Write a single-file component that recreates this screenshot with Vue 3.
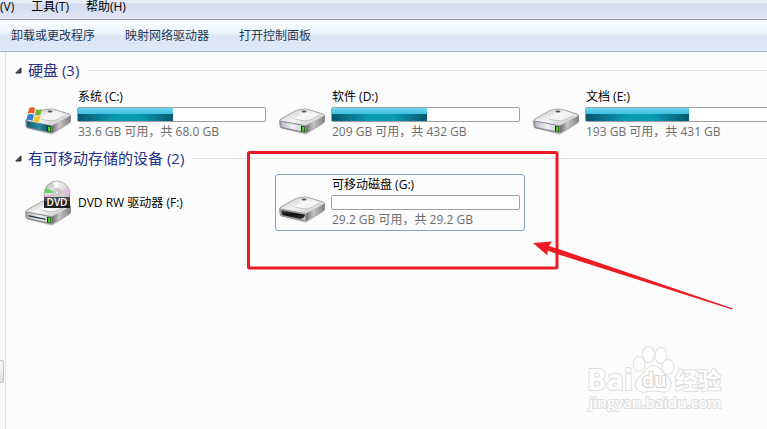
<script setup>
import { ref } from 'vue';

const menus = ['(V)', '工具(T)', '帮助(H)'];
const commands = ['卸载或更改程序', '映射网络驱动器', '打开控制面板'];

const groups = ref([
  {
    title: '硬盘 (3)',
    open: true,
    drives: [
      { name: '系统 (C:)', icon: 'system', used: 51, info: '33.6 GB 可用，共 68.0 GB' },
      { name: '软件 (D:)', icon: 'disk', used: 51, info: '209 GB 可用，共 432 GB' },
      { name: '文档 (E:)', icon: 'disk', used: 55, info: '193 GB 可用，共 431 GB' },
    ],
  },
  {
    title: '有可移动存储的设备 (2)',
    open: true,
    drives: [
      { name: 'DVD RW 驱动器 (F:)', icon: 'dvd' },
      { name: '可移动磁盘 (G:)', icon: 'removable', used: 0, info: '29.2 GB 可用，共 29.2 GB' },
    ],
  },
]);

const selected = ref('可移动磁盘 (G:)');
</script>

<template>
  <div class="explorer">
    <!-- Gradients shared by the drive icons -->
    <svg class="defs" width="0" height="0" aria-hidden="true">
      <defs>
        <linearGradient id="top" x1="0" y1="0" x2="1" y2="1">
          <stop offset="0" stop-color="#c4c4c4" />
          <stop offset="0.5" stop-color="#f4f4f4" />
          <stop offset="1" stop-color="#bcbcbc" />
        </linearGradient>
        <linearGradient id="side" x1="0" y1="0" x2="1" y2="0">
          <stop offset="0" stop-color="#6c6c6c" />
          <stop offset="0.4" stop-color="#c6c6c6" />
          <stop offset="1" stop-color="#7e7e7e" />
        </linearGradient>
        <linearGradient id="front" x1="0" y1="0" x2="1" y2="0">
          <stop offset="0" stop-color="#b9bcc4" />
          <stop offset="0.5" stop-color="#eceef4" />
          <stop offset="1" stop-color="#c5c8d0" />
        </linearGradient>
        <linearGradient id="teal" x1="0" y1="0" x2="1" y2="0">
          <stop offset="0" stop-color="#0d5870" />
          <stop offset="0.5" stop-color="#2b8ea0" />
          <stop offset="1" stop-color="#0e3f4e" />
        </linearGradient>
        <linearGradient id="hollow" x1="0" y1="0" x2="0" y2="1">
          <stop offset="0" stop-color="#555" />
          <stop offset="0.5" stop-color="#111" />
          <stop offset="1" stop-color="#333" />
        </linearGradient>
        <linearGradient id="disc" x1="0" y1="0" x2="1" y2="1">
          <stop offset="0" stop-color="#a9a9a9" />
          <stop offset="0.4" stop-color="#eeeeee" />
          <stop offset="1" stop-color="#a2a2a2" />
        </linearGradient>
      </defs>
    </svg>

    <nav class="menubar">
      <button v-for="menu in menus" :key="menu" type="button">{{ menu }}</button>
    </nav>

    <div class="toolbar">
      <button v-for="command in commands" :key="command" type="button">{{ command }}</button>
    </div>

    <div class="body">
      <div class="sidebar">
        <div class="thumb"></div>
      </div>

      <main class="content">
        <section v-for="group in groups" :key="group.title" class="group">
          <h2>
            <button type="button" :aria-expanded="group.open" @click="group.open = !group.open">
              <svg width="7" height="7" viewBox="0 0 7 7" aria-hidden="true">
                <path d="M6 0.800V6H0.800Z" fill="#595959" stroke="#262626" />
              </svg>
              {{ group.title }}
            </button>
          </h2>

          <div v-if="group.open" class="drives">
            <button
              v-for="drive in group.drives"
              :key="drive.name"
              type="button"
              class="drive"
              :class="{ selected: selected === drive.name }"
              @click="selected = drive.name"
            >
              <svg class="icon" viewBox="0 0 48 48" aria-hidden="true">
                <g :transform="drive.icon === 'dvd' ? 'translate(0 3)' : null">
                  <path d="M3 37L28 44L47 32V29L28 40Z" fill="#000" opacity="0.15" />
                  <path d="M1.500 30Q1.500 29 3 28L17 20Q19 19 22 18.500L27 18Q29 18 31 18.700L45 23Q47 24 46.500 25V30Q46.500 31 45 32L29 41.500Q27.500 42.500 26 42L3.500 37Q2 36.500 2 35Z" fill="#d6d6d6" stroke="#808080" stroke-width="0.700" />
                  <path d="M28 34.500L46.500 24.500V30.500L28 42Z" fill="url(#side)" />
                  <path d="M2 29.500L18 20L28 18.300L46 24.300L28 34.300Z" fill="url(#top)" />
                  <path d="M17 27.500L25 20.500L41 24.500L30 30Z" fill="#fff" opacity="0.450" />
                  <path d="M17 28Q28 31 32 29L42 24.500" fill="none" stroke="#aaa" stroke-width="0.600" />
                  <ellipse cx="26" cy="20.500" rx="2.500" ry="0.900" fill="#555" />
                  <path v-if="drive.icon === 'system'" d="M2.500 30L27.500 34.800V41.500L3 36.300Z" fill="url(#teal)" stroke="#57727a" stroke-width="0.600" />
                  <path v-else-if="drive.icon === 'removable'" d="M2 29.800L28 34.800V41.800L3 36.500Z" fill="#bdbdbd" stroke="#777" stroke-width="0.600" />
                  <path v-else d="M2.500 30L27.500 34.800V41.500L3 36.300Z" fill="url(#front)" stroke="#777" stroke-width="0.800" />
                  <path v-if="drive.icon === 'removable'" d="M3.200 31L27 35.700L26.800 37Q25 40.500 21 39.800L5 36.300Q3.500 35.500 3.200 31Z" fill="url(#hollow)" />
                  <template v-else>
                    <path d="M23 34.800L27 35.600V41L23 40.200Z" fill="#123312" />
                    <path d="M24.200 35.500L26.400 35.900V40.400L24.200 40Z" fill="#4be01c" />
                  </template>
                  <path v-if="drive.icon === 'dvd'" d="M4.500 33L21.500 36.800V38L4.500 34.400Z" fill="#333b48" />
                </g>

                <g v-if="drive.icon === 'system'">
                  <path d="M5 17.500Q8 15 11 17.300L10 23Q7 21 3.800 23Z" fill="#e75a25" />
                  <path d="M12 18Q15 20 18 17.500L16.500 23.500Q14 25.500 11 23.500Z" fill="#73b52d" />
                  <path d="M3.500 24Q7 22 9.800 24.200L8.500 30Q6 28 2.300 30Z" fill="#327fd0" />
                  <path d="M10.800 24.700Q14 26.500 16.500 24.500L15 30.500Q12.500 32.500 9.500 30.500Z" fill="#f9c52b" />
                </g>

                <g v-if="drive.icon === 'dvd'">
                  <circle cx="33" cy="15" r="13" fill="url(#disc)" stroke="#999" stroke-width="0.700" />
                  <path d="M33 14L22 9Q20.700 11 20.700 14Z" fill="#62d85c" />
                  <path d="M33 14L21 17L22 21Z" fill="#d98bd0" opacity="0.700" />
                  <path d="M33 14L44 9L45.500 15Z" fill="#e6b7df" opacity="0.700" />
                  <path d="M33 14L29 3L35 2.600Z" fill="#fff" opacity="0.800" />
                  <circle cx="33" cy="13.500" r="4" fill="#d9d9d9" stroke="#aaa" stroke-width="0.600" />
                  <circle cx="33" cy="13.500" r="1.700" fill="#fff" stroke="#888" stroke-width="0.600" />
                  <rect x="20" y="18" width="26" height="11" fill="#222" />
                  <rect x="20" y="18" width="26" height="4" fill="#4a4a4a" />
                  <text x="33" y="27" text-anchor="middle" class="badge">DVD</text>
                </g>
              </svg>

              <span class="details">
                <span class="name">{{ drive.name }}</span>
                <template v-if="drive.info">
                  <span class="bar">
                    <span class="fill" :style="{ width: drive.used + '%' }"></span>
                  </span>
                  <span class="info">{{ drive.info }}</span>
                </template>
              </span>
            </button>
          </div>
        </section>
      </main>
    </div>

    <!-- Red frame and arrow pointing at the removable disk -->
    <svg class="marker" width="767" height="429" viewBox="0 0 767 429" aria-hidden="true">
      <rect x="248.500" y="152.500" width="308.500" height="115.500" rx="1" fill="none" stroke="#ed1c24" stroke-width="3" />
      <path d="M533 243L552 241.500L549 246L560 249.500L733 308.500L732 309.500L557 254L547.500 250.500V255.500Z" fill="#ed1c24" />
    </svg>

    <!-- Watermark -->
    <svg class="watermark" width="150" height="76" viewBox="0 0 150 76" role="img" aria-label="Baidu 经验">
      <g class="outline">
        <text x="1" y="48" font-size="29">Bai</text>
        <ellipse cx="53" cy="22" rx="5.500" ry="7" />
        <ellipse cx="62.500" cy="12.500" rx="5.500" ry="7.500" />
        <ellipse cx="75" cy="13.500" rx="5.500" ry="7.500" />
        <ellipse cx="82" cy="25" rx="5.500" ry="7" />
        <path d="M67.500 24C62 24 60 29 56 33C51 37 48 42 51 46.500C55 52 61 48.500 67.500 48.500C74 48.500 80 52 83.500 46.500C86.500 42 84 37 79 33C75 29 73 24 67.500 24Z" />
        <text x="56" y="45" font-size="19" class="du">du</text>
        <text x="89" y="47" font-size="23" class="cjk">经验</text>
        <text x="3" y="66" font-size="15" class="url">jingyan.baidu.com</text>
      </g>
    </svg>
  </div>
</template>

<style>
body {
  margin: 0;
  background: #fcfcfc;
}
</style>

<style scoped>
.explorer {
  position: relative;
  display: flex;
  flex-direction: column;
  min-height: 100vh;
  overflow: hidden;
  background: #fcfcfc;
  font-family: "Open Sans", "Noto Sans CJK SC", sans-serif;
  font-size: 12px;
  line-height: 16px;
}

.defs {
  position: absolute;
}

button {
  padding: 0;
  border: 0;
  background: none;
  color: inherit;
  font: inherit;
  white-space: nowrap;
}

/* ---------Menu and toolbar--------- */
.menubar {
  display: flex;
  align-items: flex-start;
  gap: 17px;
  height: 19px;
  box-sizing: border-box;
  border-bottom: 1px solid #f0f2fa;
  background: linear-gradient(#e9edf8 0, #e9edf8 3px, #d3daed 4px, #dfe5f5 100%);
  color: #000;
}

.menubar button {
  height: 14px;
  line-height: 14px;
}

.toolbar {
  display: flex;
  align-items: center;
  gap: 30px;
  height: 33px;
  box-sizing: border-box;
  padding-left: 11px;
  border-top: 1px solid #8d8fae;
  border-bottom: 1px solid #a0afc9;
  background: linear-gradient(#fafdff 0, #e9f2fb 14px, #dce7f5 15px, #dce8f5 28px, #e4eef9 100%);
  color: #1e395b;
}

/* ---------Content--------- */
.body {
  display: flex;
  flex: 1;
}

.sidebar {
  display: flex;
  flex-direction: column;
  justify-content: flex-end;
  width: 5px;
  flex: none;
  padding-bottom: 46px;
  box-sizing: border-box;
}

.thumb {
  width: 4px;
  height: 23px;
  box-sizing: border-box;
  border: 1px solid #c4c4c4;
  border-left: 0;
  border-radius: 0 3px 3px 0;
  background: linear-gradient(#f7f7f7, #e2e2e2);
}

.content {
  flex: 1;
  min-width: 0;
  padding-top: 7px;
  border-left: 1px solid #d6e5f5;
}

.group {
  margin-bottom: 4px;
}

h2 {
  display: flex;
  align-items: center;
  gap: 8px;
  height: 22px;
  margin: 0 0 5px;
  padding-left: 9px;
  color: #1e3287;
  font-size: 15px;
  font-weight: normal;
}

h2::after {
  content: "";
  flex: 1;
  height: 1px;
  background: #e2e2e2;
}

h2 button {
  display: flex;
  align-items: center;
  gap: 6px;
  line-height: 22px;
}

.drives {
  display: grid;
  grid-template-columns: repeat(3, 250px);
  gap: 4px;
  padding-left: 15px;
}

.drive {
  display: flex;
  align-items: center;
  gap: 5px;
  height: 57px;
  box-sizing: border-box;
  padding: 0 4px 0 2px;
  border: 1px solid transparent;
  border-radius: 3px;
  text-align: left;
}

.drive.selected {
  border-color: #7da2ce;
}

.icon {
  width: 48px;
  height: 48px;
  flex: none;
}

.badge {
  fill: #fff;
  font-family: "Open Sans", sans-serif;
  font-size: 10px;
  font-weight: 600;
}

.details {
  display: flex;
  flex-direction: column;
  flex: 1;
}

.name {
  padding-left: 1px;
  line-height: 18px;
  color: #000;
}

.bar {
  display: flex;
  height: 15px;
  margin-top: 1px;
  box-sizing: border-box;
  border: 1px solid #a0a0a0;
  border-radius: 2px;
  background: #fff;
}

.fill {
  background:
    linear-gradient(#6bd8f2, #3fbfe0) top / 100% 6px no-repeat,
    linear-gradient(90deg, #06586e, #0a9ab4 40%, #0a9ab4 65%, #06586e);
}

.info {
  padding-left: 1px;
  line-height: 19px;
  color: #6d6d6d;
}

/* ---------Overlays--------- */
.marker {
  position: absolute;
  top: 0;
  left: 0;
  pointer-events: none;
}

.watermark {
  position: absolute;
  right: 31px;
  bottom: 11px;
  pointer-events: none;
}

.outline {
  fill: #fefefe;
  stroke: #dedede;
  stroke-width: 2px;
  paint-order: stroke;
  font-family: "Open Sans", sans-serif;
  font-weight: bold;
}

.du {
  stroke: #d4d4d4;
}

.cjk {
  font-family: "Noto Sans CJK SC", sans-serif;
}

.url {
  font-weight: 600;
}
</style>
